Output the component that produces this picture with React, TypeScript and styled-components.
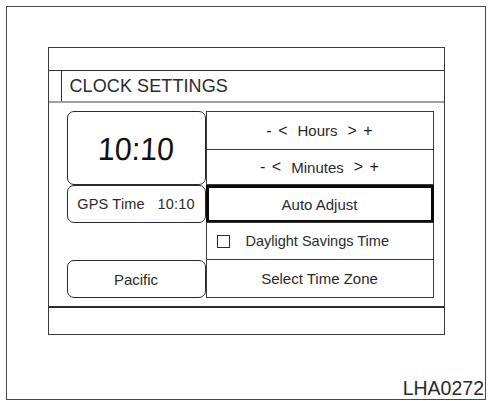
import styled, { createGlobalStyle } from 'styled-components';

const GlobalStyle = createGlobalStyle`
  html, body {
    margin: 0;
    padding: 0;
    background: #ffffff;
  }
  body {
    font-family: "Liberation Sans", Arial, sans-serif;
    color: #1a1a1a;
  }
`;

const Page = styled.div`
  width: 490px;
  height: 401px;
  padding: 6px 4px 1px 6px;
  box-sizing: border-box;
`;

const Frame = styled.div`
  width: 480px;
  height: 394px;
  box-sizing: border-box;
  border: 1.5px solid #4a4a4a;
  display: flex;
  flex-direction: column;
`;

const Screen = styled.div`
  margin: 40px 0 0 40.5px;
  width: 397px;
  height: 288px;
  box-sizing: border-box;
  border: 1.5px solid #3a3a3a;
  display: flex;
  flex-direction: column;
`;

const TopStrip = styled.div`
  height: 22px;
  border-bottom: 1.5px solid #2e2e2e;
`;

const TitleBar = styled.div`
  height: 30px;
  border-bottom: 2px solid #a0a0a0;
  display: flex;
  align-items: stretch;
`;

const TitleTab = styled.div`
  width: 12px;
  border-right: 1.5px solid #2e2e2e;
`;

const Title = styled.div`
  padding-left: 8px;
  font-size: 18px;
  line-height: 31px;
  color: #2a2a2a;
  letter-spacing: 0.1px;
`;

const Content = styled.div`
  flex: 1;
  padding: 8px 9px 8px 18px;
  border-bottom: 2px solid #2e2e2e;
  display: grid;
  grid-template-columns: 139px 228px;
  grid-template-rows: 39px 35px 38px 37px 38px;
`;

const Footer = styled.div`
  height: 26px;
`;

const Pill = styled.div<{ $row: string }>`
  grid-column: 1;
  grid-row: ${(p) => p.$row};
  box-sizing: border-box;
  border: 1.5px solid #2a2a2a;
  border-radius: 7px;
  display: flex;
  align-items: center;
  justify-content: center;
  font-size: 15px;
  color: #2a2a2a;
`;

const Digits = styled.div`
  font-size: 32px;
  line-height: 1;
  color: #111;
  transform: skewX(-3deg) scaleX(0.95);
  letter-spacing: 0;
  margin-top: 2px;
`;

const GpsText = styled.span`
  font-size: 14.5px;
  letter-spacing: 0.2px;
  white-space: pre;
`;

const Cell = styled.div<{ $row: number; $strong?: boolean }>`
  grid-column: 2;
  grid-row: ${(p) => p.$row};
  box-sizing: border-box;
  border: ${(p) => (p.$strong ? '3px solid #0a0a0a' : '1px solid #3a3a3a')};
  margin-top: ${(p) => (p.$row === 1 || p.$strong ? '0' : '-1px')};
  display: flex;
  align-items: center;
  justify-content: center;
  font-size: 15px;
  color: #2a2a2a;
  gap: 10px;
`;

const Arrows = styled.span`
  font-size: 16px;
  word-spacing: 2px;
  color: #1a1a1a;
`;

const CheckRow = styled(Cell)`
  justify-content: flex-start;
  padding-left: 10px;
  gap: 16px;
  font-size: 14.5px;
`;

const Box = styled.span`
  width: 11px;
  height: 11px;
  border: 1.5px solid #2a2a2a;
  flex: none;
`;

const Code = styled.div`
  margin-top: auto;
  align-self: flex-end;
  padding-right: 1px;
  font-size: 19.5px;
  line-height: 22px;
  color: #2a2a2a;
`;

export default function App() {
  return (
    <>
      <GlobalStyle />
      <Page>
        <Frame>
          <Screen>
            <TopStrip />
            <TitleBar>
              <TitleTab />
              <Title>CLOCK SETTINGS</Title>
            </TitleBar>
            <Content>
              <Pill $row="1 / span 2">
                <Digits>10:10</Digits>
              </Pill>
              <Pill $row="3">
                <GpsText>GPS Time   10:10</GpsText>
              </Pill>
              <Pill $row="5">Pacific</Pill>

              <Cell $row={1}>
                <Arrows>-  &lt;</Arrows>
                <span>Hours</span>
                <Arrows>&gt;  +</Arrows>
              </Cell>
              <Cell $row={2}>
                <Arrows>-  &lt;</Arrows>
                <span>Minutes</span>
                <Arrows>&gt;  +</Arrows>
              </Cell>
              <Cell $row={3} $strong>Auto Adjust</Cell>
              <CheckRow $row={4}>
                <Box />
                <span>Daylight Savings Time</span>
              </CheckRow>
              <Cell $row={5}>Select Time Zone</Cell>
            </Content>
            <Footer />
          </Screen>
          <Code>LHA0272</Code>
        </Frame>
      </Page>
    </>
  );
}
